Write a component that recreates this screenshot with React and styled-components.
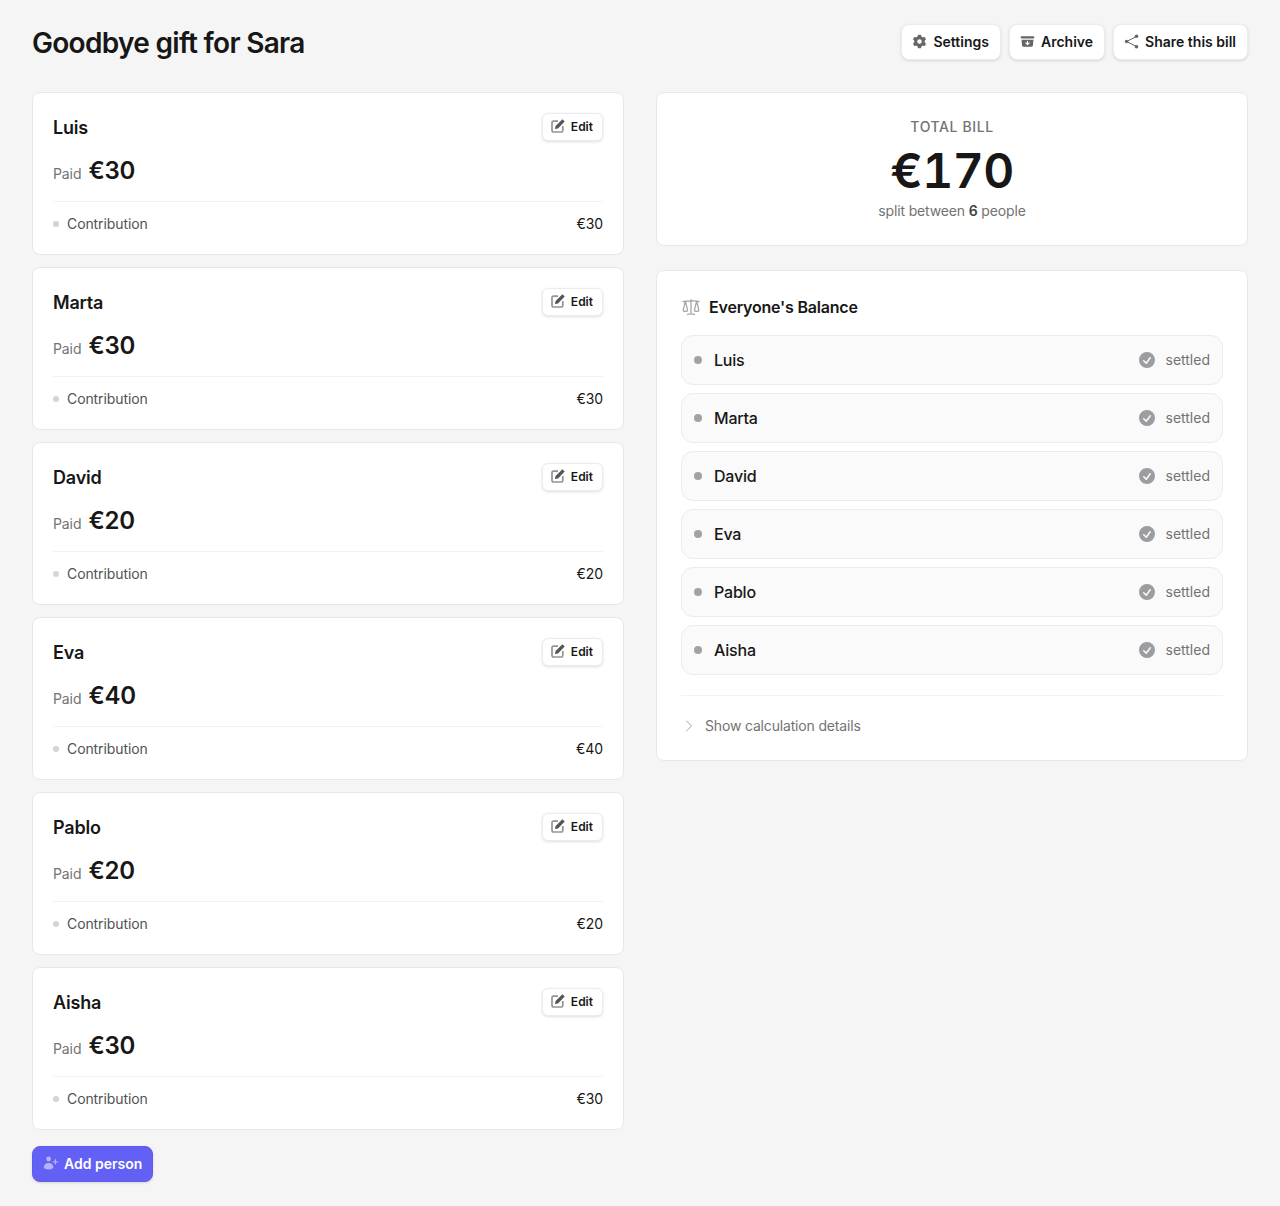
import React from 'react';
import styled, { createGlobalStyle } from 'styled-components';
import {
  HiMiniCog6Tooth,
  HiMiniArchiveBoxArrowDown,
  HiMiniUserPlus,
  HiOutlineScale,
  HiMiniCheckCircle,
  HiOutlineChevronRight,
} from 'react-icons/hi2';

const GlobalStyle = createGlobalStyle`
  * { box-sizing: border-box; }
  body {
    margin: 0;
    background: #f5f5f5;
    color: #171717;
    font-family: Inter, "Liberation Sans", sans-serif;
  }
`;

const Page = styled.div`
  padding: 24px 32px;
`;

const Header = styled.header`
  display: flex;
  justify-content: space-between;
  align-items: center;
  height: 36px;
  margin-bottom: 32px;
`;

const Title = styled.h1`
  margin: 2px 0 0;
  font-size: 28px;
  line-height: 36px;
  font-weight: 600;
  letter-spacing: -0.7px;
`;

const Actions = styled.div`
  display: flex;
  gap: 8px;
`;

const Button = styled.button`
  display: flex;
  align-items: center;
  gap: 6px;
  height: 36px;
  padding: 0 11px 2px 10px;
  border: 1px solid #ececec;
  border-radius: 8px;
  background: #fff;
  box-shadow: 0 1px 3px rgba(0, 0, 0, 0.13);
  color: #171717;
  font-family: inherit;
  font-size: 14px;
  font-weight: 600;
  svg { width: 15px; height: 15px; color: #666; }
`;

const Columns = styled.div`
  display: grid;
  grid-template-columns: 592px 592px;
  gap: 32px;
  align-items: start;
`;

const Stack = styled.div`
  display: flex;
  flex-direction: column;
`;

const PersonList = styled(Stack)`
  gap: 12px;
  margin-bottom: 16px;
`;

const Card = styled.section`
  background: #fff;
  border: 1px solid #e8e8e8;
  border-radius: 8px;
`;

const PersonCard = styled(Card)`
  height: 163px;
  padding: 20px;
`;

const PersonTop = styled.div`
  display: flex;
  justify-content: space-between;
  align-items: center;
  height: 28px;
`;

const Name = styled.h3`
  margin: 0;
  font-size: 18px;
  font-weight: 600;
  letter-spacing: -0.2px;
`;

const EditButton = styled(Button)`
  height: 28px;
  padding: 0 9px 2px 8px;
  gap: 6px;
  border-radius: 6px;
  font-size: 12px;
  svg { width: 14px; height: 14px; }
`;

const Paid = styled.div`
  display: flex;
  align-items: baseline;
  gap: 7px;
  height: 33px;
  margin-top: 14px;
`;

const PaidLabel = styled.span`
  font-size: 14px;
  letter-spacing: -0.1px;
  color: #737373;
`;

const PaidAmount = styled.span`
  font-size: 24px;
  line-height: 32px;
  font-weight: 600;
  letter-spacing: -0.2px;
`;

const Line = styled.div`
  display: flex;
  justify-content: space-between;
  align-items: center;
  margin-top: 13px;
  padding-top: 12px;
  border-top: 1px solid #f3f3f3;
  font-size: 14px;
  line-height: 20px;
  letter-spacing: -0.1px;
  color: #525252;
`;

const LineLabel = styled.span`
  display: flex;
  align-items: center;
  gap: 8px;
`;

const Dot = styled.span`
  width: ${({ $size }) => $size}px;
  height: ${({ $size }) => $size}px;
  border-radius: 50%;
  background: ${({ $color }) => $color};
`;

const LineValue = styled.span`
  color: #171717;
`;

const AddButton = styled(Button)`
  align-self: flex-start;
  gap: 5px;
  padding-right: 10px;
  border-color: #5f5bf0;
  background: #6360f5;
  color: #fff;
  svg { width: 16px; height: 16px; color: #b4b3fb; }
`;

const TotalCard = styled(Card)`
  height: 154px;
  margin-bottom: 24px;
  padding-top: 24px;
  text-align: center;
`;

const TotalLabel = styled.div`
  font-size: 14px;
  line-height: 20px;
  font-weight: 500;
  letter-spacing: 0.6px;
  color: #737373;
`;

const TotalAmount = styled.div`
  font-size: 48px;
  line-height: 48px;
  font-weight: 600;
  margin-top: 10px;
  letter-spacing: -0.6px;
  font-variant-numeric: tabular-nums;
`;

const TotalNote = styled.div`
  margin-top: 6px;
  font-size: 14px;
  line-height: 20px;
  letter-spacing: -0.15px;
  color: #737373;
  b { font-weight: 600; color: #404040; }
`;

const BalanceCard = styled(Card)`
  padding: 24px;
`;

const BalanceTitle = styled.h2`
  display: flex;
  align-items: center;
  gap: 8px;
  margin: 0 0 16px;
  height: 24px;
  font-size: 16px;
  font-weight: 600;
  letter-spacing: -0.2px;
  svg { width: 20px; height: 20px; color: #a3a3a3; }
`;

const BalanceList = styled(Stack)`
  gap: 8px;
`;

const BalanceRow = styled.div`
  display: flex;
  align-items: center;
  gap: 12px;
  height: 50px;
  padding: 0 12px;
  background: #fafafa;
  border: 1px solid #ececec;
  border-radius: 12px;
  font-size: 16px;
  font-weight: 500;
  letter-spacing: -0.2px;
`;

const Status = styled.span`
  display: flex;
  align-items: center;
  gap: 9px;
  margin-left: auto;
  padding-bottom: 2px;
  font-size: 14px;
  font-weight: 400;
  letter-spacing: 0;
  color: #737373;
  svg { width: 20px; height: 20px; margin-top: 2px; color: #9c9ca1; }
`;

const Details = styled.div`
  display: flex;
  align-items: center;
  gap: 8px;
  margin-top: 20px;
  padding-top: 20px;
  border-top: 1px solid #f3f3f3;
  font-size: 14px;
  line-height: 20px;
  letter-spacing: -0.17px;
  color: #737373;
  svg { width: 16px; height: 16px; color: #a3a3a3; }
`;

const ShareIcon = () => (
  <svg viewBox="0 0 15 15" fill="currentColor" stroke="currentColor" strokeWidth="1">
    <path d="M12.5 2.5 2.5 7.5l10 5" fill="none" />
    <circle cx="2.5" cy="7.5" r="1.7" stroke="none" />
    <circle cx="12.5" cy="2.2" r="1.8" stroke="none" />
    <circle cx="12.5" cy="12.8" r="1.8" stroke="none" />
  </svg>
);

const EditIcon = () => (
  <svg viewBox="0 0 14 14" fill="none">
    <path d="M7 2.2H2.4A1.4 1.4 0 0 0 1 3.6v8A1.4 1.4 0 0 0 2.4 13h8a1.4 1.4 0 0 0 1.4-1.4V7" stroke="#949494" strokeWidth="1.7" />
    <path d="M3.9 10.1 4.6 7 11.4.3l2.3 2.3L7 9.4z" fill="#555" />
  </svg>
);

const people = [
  { name: 'Luis', amount: 30 },
  { name: 'Marta', amount: 30 },
  { name: 'David', amount: 20 },
  { name: 'Eva', amount: 40 },
  { name: 'Pablo', amount: 20 },
  { name: 'Aisha', amount: 30 },
];

const App = () => (
  <Page>
    <GlobalStyle />
    <Header>
      <Title>Goodbye gift for Sara</Title>
      <Actions>
        <Button><HiMiniCog6Tooth />Settings</Button>
        <Button><HiMiniArchiveBoxArrowDown />Archive</Button>
        <Button><ShareIcon />Share this bill</Button>
      </Actions>
    </Header>
    <Columns>
      <Stack>
        <PersonList>
          {people.map((person) => (
            <PersonCard key={person.name}>
              <PersonTop>
                <Name>{person.name}</Name>
                <EditButton><EditIcon />Edit</EditButton>
              </PersonTop>
              <Paid>
                <PaidLabel>Paid</PaidLabel>
                <PaidAmount>€{person.amount}</PaidAmount>
              </Paid>
              <Line>
                <LineLabel><Dot $size={6} $color="#d4d4d4" />Contribution</LineLabel>
                <LineValue>€{person.amount}</LineValue>
              </Line>
            </PersonCard>
          ))}
        </PersonList>
        <AddButton><HiMiniUserPlus />Add person</AddButton>
      </Stack>
      <Stack>
        <TotalCard>
          <TotalLabel>TOTAL BILL</TotalLabel>
          <TotalAmount>€170</TotalAmount>
          <TotalNote>split between <b>6</b> people</TotalNote>
        </TotalCard>
        <BalanceCard>
          <BalanceTitle><HiOutlineScale />Everyone's Balance</BalanceTitle>
          <BalanceList>
            {people.map((person) => (
              <BalanceRow key={person.name}>
                <Dot $size={8} $color="#a1a1a6" />
                {person.name}
                <Status><HiMiniCheckCircle />settled</Status>
              </BalanceRow>
            ))}
          </BalanceList>
          <Details><HiOutlineChevronRight />Show calculation details</Details>
        </BalanceCard>
      </Stack>
    </Columns>
  </Page>
);

export default App;
